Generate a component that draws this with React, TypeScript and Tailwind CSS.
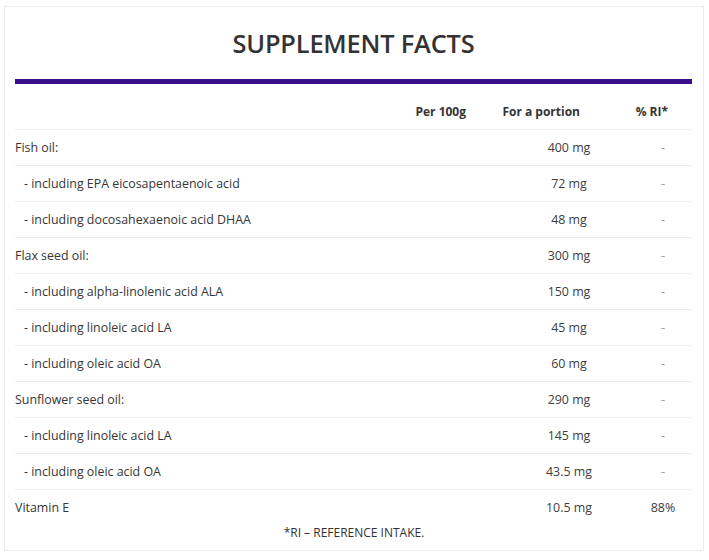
import React from "react";

type Row = { name: string; value: string; ri: string; sub?: boolean };

const rows: Row[] = [
  { name: "Fish oil:", value: "400 mg", ri: "-" },
  { name: "- including EPA eicosapentaenoic acid", value: "72 mg", ri: "-", sub: true },
  { name: "- including docosahexaenoic acid DHAA", value: "48 mg", ri: "-", sub: true },
  { name: "Flax seed oil:", value: "300 mg", ri: "-" },
  { name: "- including alpha-linolenic acid ALA", value: "150 mg", ri: "-", sub: true },
  { name: "- including linoleic acid LA", value: "45 mg", ri: "-", sub: true },
  { name: "- including oleic acid OA", value: "60 mg", ri: "-", sub: true },
  { name: "Sunflower seed oil:", value: "290 mg", ri: "-" },
  { name: "- including linoleic acid LA", value: "145 mg", ri: "-", sub: true },
  { name: "- including oleic acid OA", value: "43.5 mg", ri: "-", sub: true },
  { name: "Vitamin E", value: "10.5 mg", ri: "88%" },
];

export default function App() {
  return (
    <div
      className="w-[709px] h-[560px] bg-white overflow-hidden"
      style={{ fontFamily: '"Open Sans", "Liberation Sans", sans-serif' }}
    >
      <div className="ml-[4px] mt-[6px] w-[700px] h-[545px] border border-[#ebebeb] pl-[10px] pr-[11px] flex flex-col">
        <div className="h-[72px] flex items-center justify-center">
          <h1 className="text-[25.4px] font-semibold text-[#333333] tracking-[-0.2px]">SUPPLEMENT FACTS</h1>
        </div>
        <div className="h-[5px] bg-[#380e8c]" />
        <div className="mt-[10px] h-[36px] border-b border-[#ececec] flex items-center text-[12px] font-bold text-[#333333]">
          <div className="flex-1" />
          <div className="w-[80px] text-right">Per 100g</div>
          <div className="w-[114px] text-right">For a portion</div>
          <div className="w-[112px] text-right pr-[24px]">% RI*</div>
        </div>
        {rows.map((r, i) => (
          <div
            key={i}
            className={
              "h-[36px] flex items-center pt-[1px] text-[12.4px] text-[#363636] " +
              (i < rows.length - 1 ? "border-b border-[#ececec]" : "")
            }
          >
            <div className={"flex-1 " + (r.sub ? "pl-[9px]" : "")}>{r.name}</div>
            <div className="w-[80px] text-center text-[#404040]">{r.value}</div>
            <div className="w-[25px]" />
            <div className={"w-[58px] text-center " + (r.ri === "-" ? "text-[#9a9a9a]" : "text-[#404040]")}>
              {r.ri}
            </div>
          </div>
        ))}
        <div className="-mt-[1px] text-center text-[12px] leading-[16px] text-[#333333] pl-[1px]">
          *RI – REFERENCE INTAKE.
        </div>
      </div>
    </div>
  );
}
